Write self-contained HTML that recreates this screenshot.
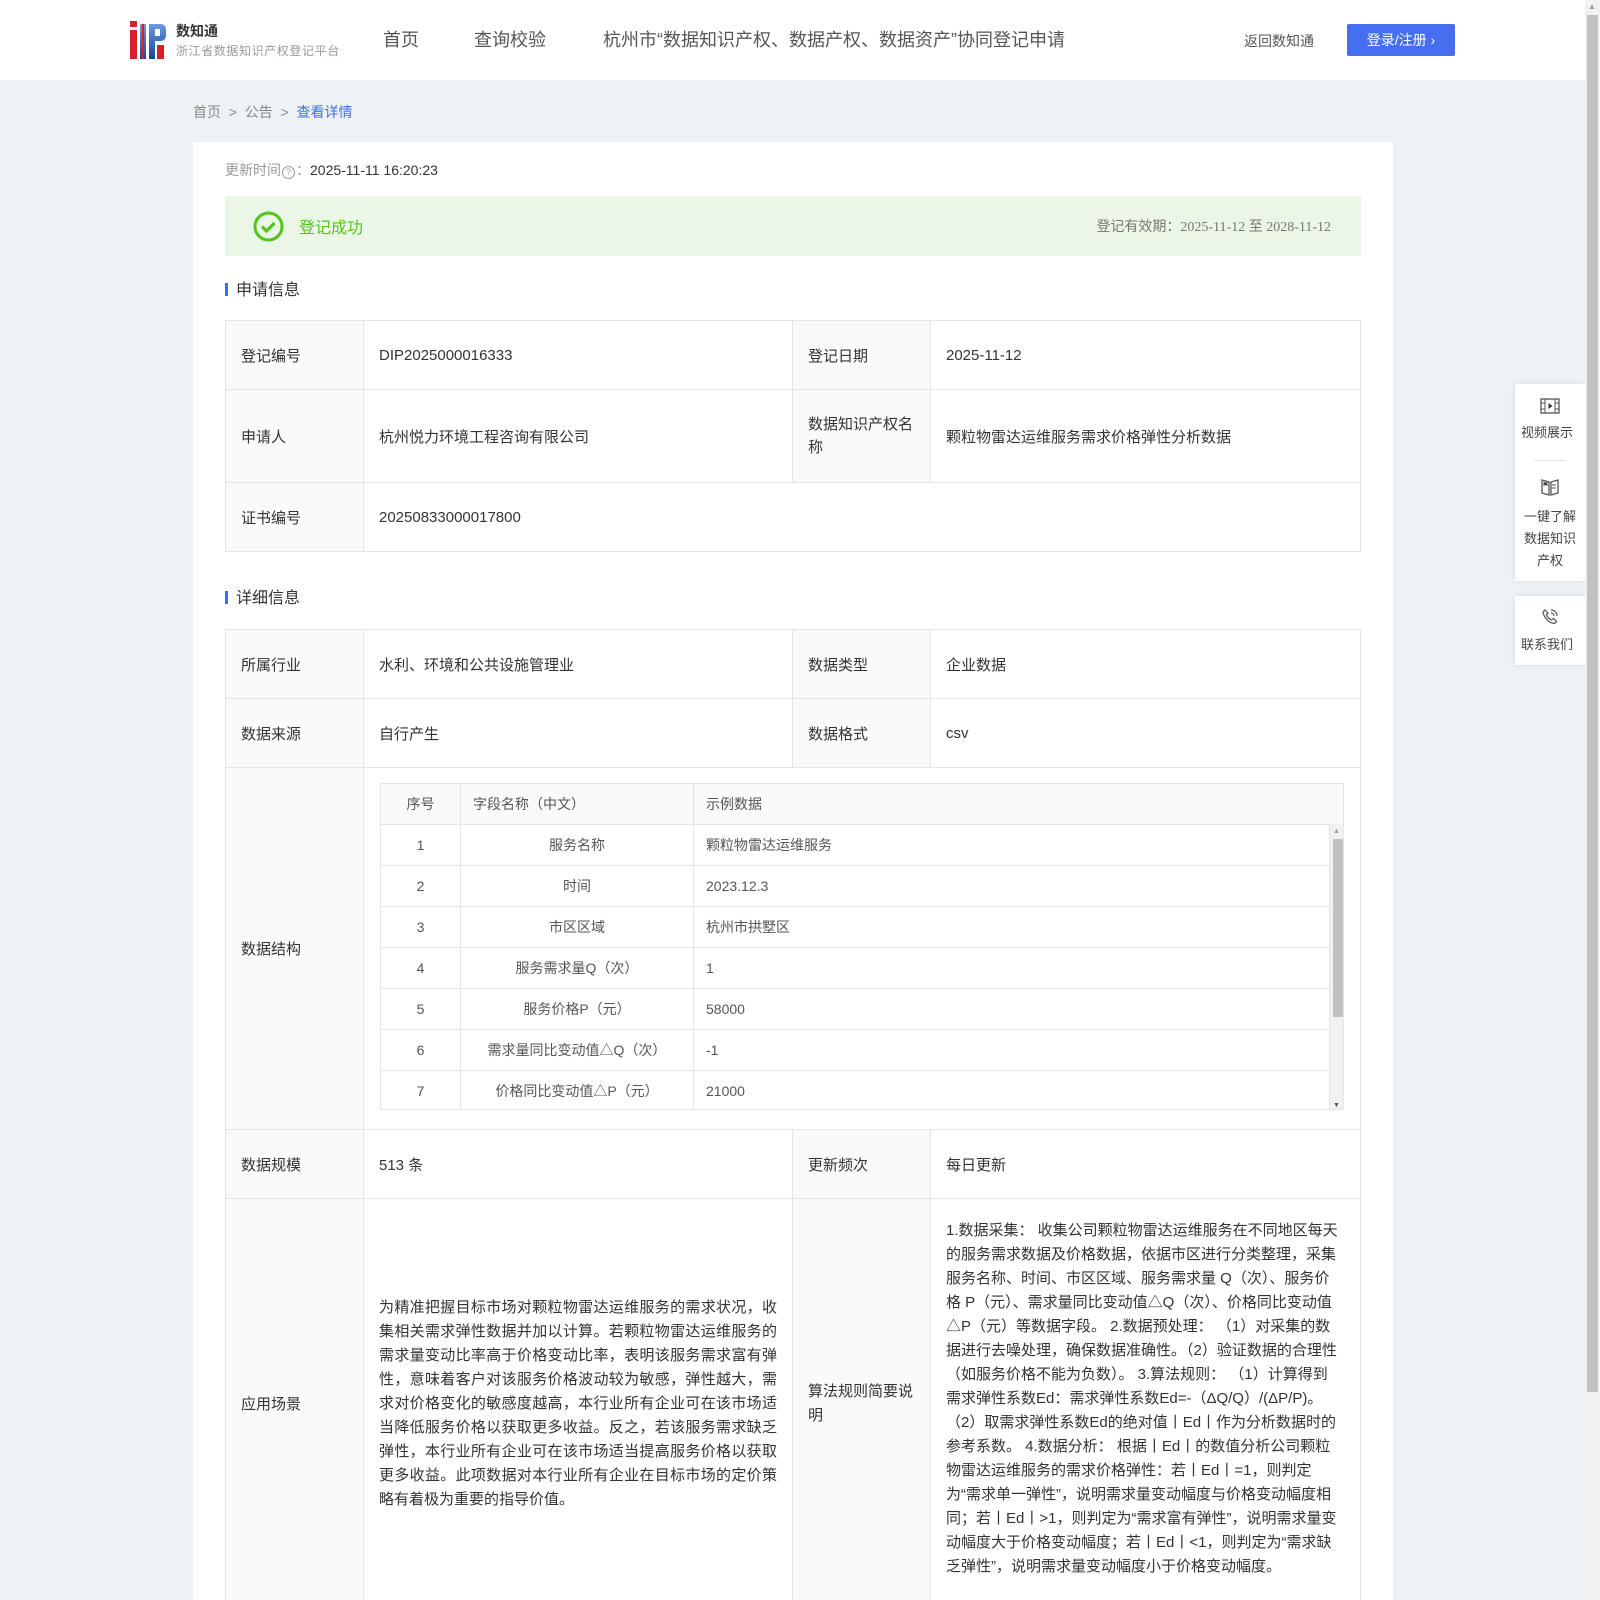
<!DOCTYPE html>
<html><head><meta charset="utf-8"><style>
*{margin:0;padding:0;box-sizing:border-box}
html,body{width:1600px;height:1600px;overflow:hidden}
body{background:#eef2f5;font-family:"Liberation Sans","Noto Sans CJK SC",sans-serif;color:#333;font-size:14px;position:relative}
.hdr{position:absolute;left:0;top:0;width:1585px;height:80px;background:#fff}
.abs{position:absolute;white-space:nowrap}
.nav{font-size:18px;color:#555;top:26px}
.card{position:absolute;left:193px;top:142px;width:1200px;height:1500px;background:#fff}
table{border-collapse:collapse;position:absolute;table-layout:fixed}
td{border:1px solid #e5e5e5;padding:0 15px;font-size:15px;color:#333;vertical-align:middle}
td.l{background:#fafafa}
.sec{font-size:16px;color:#333;}
.sec:before{content:"";display:inline-block;width:3px;height:13px;background:#3e6ef0;margin-right:8px;vertical-align:-1px}
.nt td{font-size:14px;color:#555;padding:0 12px;height:41px}
.side{position:absolute;left:1515px;width:70px;background:#fff;box-shadow:0 0 6px rgba(0,0,0,.1);text-align:center;font-size:13px;color:#444}
</style></head><body>
<div class="hdr">
  <svg class="abs" style="left:130px;top:21px" width="36" height="38" viewBox="0 0 36 38">
    <defs><linearGradient id="g" x1="0" y1="0" x2="0" y2="1"><stop offset="0" stop-color="#6a9be0"/><stop offset="1" stop-color="#1c3f9a"/></linearGradient></defs>
    <rect x="0" y="0" width="7" height="6" fill="#d8202a"/><rect x="0" y="9" width="7" height="29" fill="#d8202a"/>
    <rect x="10" y="3" width="6" height="35" fill="url(#g)"/><rect x="12" y="3" width="2" height="35" fill="#d8202a"/>
    <path d="M19 3h12a5 5 0 0 1 5 5v7a5 5 0 0 1-5 5h-6v18h-6z" fill="url(#g)"/><rect x="25" y="8" width="5" height="7" fill="#fff"/>
    <rect x="27" y="24" width="7" height="14" fill="#d8202a"/>
  </svg>
  <div class="abs" style="left:176px;top:21px;font-size:14px;font-weight:bold;color:#333">数知通</div>
  <div class="abs" style="left:176px;top:42px;font-size:12px;letter-spacing:0.6px;color:#999">浙江省数据知识产权登记平台</div>
  <div class="abs nav" style="left:383px">首页</div>
  <div class="abs nav" style="left:474px">查询校验</div>
  <div class="abs nav" style="left:603px">杭州市“数据知识产权、数据产权、数据资产”协同登记申请</div>
  <div class="abs" style="left:1244px;top:31px;font-size:14px;color:#555">返回数知通</div>
  <div class="abs" style="left:1347px;top:24px;width:108px;height:32px;background:#456ff0;border-radius:2px;color:#fff;font-size:14px;line-height:32px;text-align:center">登录/注册 ›</div>
</div>
<div class="abs" style="left:193px;top:102px;font-size:14px;color:#888">首页 &nbsp;&gt;&nbsp; 公告 &nbsp;&gt;&nbsp; <span style="color:#3e6ef0">查看详情</span></div>
<div class="card">
  <div class="abs" style="left:32px;top:18px;font-size:14px;color:#999">更新时间<span style="display:inline-block;width:13px;height:13px;border:1px solid #999;border-radius:50%;font-size:9px;line-height:11px;text-align:center;vertical-align:0;margin:0 1px">?</span>：<span style="color:#333">2025-11-11 16:20:23</span></div>
  <div class="abs" style="left:32px;top:54px;width:1136px;height:60px;background:#ebf7e6">
    <svg class="abs" style="left:28px;top:15px" width="31" height="31" viewBox="0 0 31 31"><circle cx="15.5" cy="15.5" r="13.5" fill="none" stroke="#52c41a" stroke-width="3"/><path d="M9 15.5l4.5 4.5 8-8" fill="none" stroke="#52c41a" stroke-width="3.2"/></svg>
    <div class="abs" style="left:74px;top:18px;font-size:16px;color:#52c41a">登记成功</div>
    <div class="abs" style="right:30px;top:20px;font-size:14px;color:#777;font-family:'Liberation Serif','Noto Sans CJK SC',serif">登记有效期：2025-11-12 至 2028-11-12</div>
  </div>
  <div class="abs sec" style="left:32px;top:134px">申请信息</div>
  <table style="left:32px;top:178px;width:1136px">
    <colgroup><col style="width:138px"><col style="width:429px"><col style="width:138px"><col></colgroup>
    <tr style="height:69px"><td class="l">登记编号</td><td>DIP2025000016333</td><td class="l">登记日期</td><td>2025-11-12</td></tr>
    <tr style="height:93px"><td class="l">申请人</td><td>杭州悦力环境工程咨询有限公司</td><td class="l" style="line-height:23px">数据知识产权名称</td><td>颗粒物雷达运维服务需求价格弹性分析数据</td></tr>
    <tr style="height:69px"><td class="l">证书编号</td><td colspan="3">20250833000017800</td></tr>
  </table>
  <div class="abs sec" style="left:32px;top:442px">详细信息</div>
  <table style="left:32px;top:487px;width:1136px">
    <colgroup><col style="width:138px"><col style="width:429px"><col style="width:138px"><col></colgroup>
    <tr style="height:69px"><td class="l">所属行业</td><td>水利、环境和公共设施管理业</td><td class="l">数据类型</td><td>企业数据</td></tr>
    <tr style="height:69px"><td class="l">数据来源</td><td>自行产生</td><td class="l">数据格式</td><td>csv</td></tr>
    <tr style="height:362px"><td class="l">数据结构</td><td colspan="3" style="position:relative"></td></tr>
    <tr style="height:69px"><td class="l">数据规模</td><td>513 条</td><td class="l">更新频次</td><td>每日更新</td></tr>
    <tr style="height:410px"><td class="l">应用场景</td><td style="line-height:24px;font-size:15px;text-align:justify;padding-right:15px">为精准把握目标市场对颗粒物雷达运维服务的需求状况，收集相关需求弹性数据并加以计算。若颗粒物雷达运维服务的需求量变动比率高于价格变动比率，表明该服务需求富有弹性，意味着客户对该服务价格波动较为敏感，弹性越大，需求对价格变化的敏感度越高，本行业所有企业可在该市场适当降低服务价格以获取更多收益。反之，若该服务需求缺乏弹性，本行业所有企业可在该市场适当提高服务价格以获取更多收益。此项数据对本行业所有企业在目标市场的定价策略有着极为重要的指导价值。</td><td class="l" style="line-height:24px">算法规则简要说明</td><td style="line-height:24px;font-size:15px;padding-right:20px;vertical-align:top;padding-top:20px">1.数据采集： 收集公司颗粒物雷达运维服务在不同地区每天的服务需求数据及价格数据，依据市区进行分类整理，采集服务名称、时间、市区区域、服务需求量 Q（次）、服务价格 P（元）、需求量同比变动值△Q（次）、价格同比变动值△P（元）等数据字段。 2.数据预处理： （1）对采集的数据进行去噪处理，确保数据准确性。（2）验证数据的合理性（如服务价格不能为负数）。 3.算法规则： （1）计算得到需求弹性系数Ed：需求弹性系数Ed=-（ΔQ/Q）/(ΔP/P)。（2）取需求弹性系数Ed的绝对值丨Ed丨作为分析数据时的参考系数。 4.数据分析： 根据丨Ed丨的数值分析公司颗粒物雷达运维服务的需求价格弹性：若丨Ed丨=1，则判定为“需求单一弹性”，说明需求量变动幅度与价格变动幅度相同；若丨Ed丨&gt;1，则判定为“需求富有弹性”，说明需求量变动幅度大于价格变动幅度；若丨Ed丨&lt;1，则判定为“需求缺乏弹性”，说明需求量变动幅度小于价格变动幅度。</td></tr>
  </table>
  <div class="abs" style="left:187px;top:641px;width:964px;height:327px;border:1px solid #e5e5e5;overflow:hidden">
    <table class="nt" style="left:-1px;top:-1px;width:964px">
      <colgroup><col style="width:80px"><col style="width:233px"><col></colgroup>
      <tr style="background:#fafafa"><td style="text-align:center">序号</td><td>字段名称（中文）</td><td>示例数据</td></tr>
      <tr><td style="text-align:center">1</td><td style="text-align:center">服务名称</td><td>颗粒物雷达运维服务</td></tr>
      <tr><td style="text-align:center">2</td><td style="text-align:center">时间</td><td>2023.12.3</td></tr>
      <tr><td style="text-align:center">3</td><td style="text-align:center">市区区域</td><td>杭州市拱墅区</td></tr>
      <tr><td style="text-align:center">4</td><td style="text-align:center">服务需求量Q（次）</td><td>1</td></tr>
      <tr><td style="text-align:center">5</td><td style="text-align:center">服务价格P（元）</td><td>58000</td></tr>
      <tr><td style="text-align:center">6</td><td style="text-align:center">需求量同比变动值△Q（次）</td><td>-1</td></tr>
      <tr><td style="text-align:center">7</td><td style="text-align:center">价格同比变动值△P（元）</td><td>21000</td></tr>
    </table>
    <div class="abs" style="left:948px;top:40px;width:15px;height:287px;background:#f1f1f1;border-left:1px solid #e5e5e5"><div class="abs" style="left:3px;top:15px;width:10px;height:178px;background:#c1c1c1"></div><div class="abs" style="left:3px;top:4px;font-size:7px;color:#999">▲</div><div class="abs" style="left:3px;bottom:2px;font-size:7px;color:#555">▼</div></div>
  </div>
</div>
<div class="side" style="top:384px;height:197px">
  <svg class="abs" style="left:25px;top:14px" width="20" height="16" viewBox="0 0 20 16"><rect x="1" y="1" width="18" height="14" fill="none" stroke="#555" stroke-width="1.3"/><path d="M5 1v14M15 1v14M1 5h4M1 11h4M15 5h4M15 11h4" stroke="#555" stroke-width="1"/><path d="M8.5 5v6l4-3z" fill="#333"/></svg>
  <div class="abs" style="left:6px;top:38px">视频展示</div>
  <div class="abs" style="left:19px;top:76px;width:32px;height:1px;background:#e3e3e3"></div>
  <svg class="abs" style="left:25px;top:94px" width="20" height="18" viewBox="0 0 20 18"><path d="M2 2l7 2v13l-7-2zM18 2l-7 2v13l7-2z" fill="none" stroke="#555" stroke-width="1.3"/><path d="M3.5 4v4l2-1 2 1V4.5" fill="#444"/><path d="M12 7h4M12 10h4" stroke="#555"/></svg>
  <div class="abs" style="left:6px;top:122px;line-height:22px;width:58px;white-space:normal">一键了解数据知识产权</div>
</div>
<div class="side" style="top:596px;height:69px">
  <svg class="abs" style="left:26px;top:12px" width="18" height="18" viewBox="0 0 18 18"><path d="M4 2l3 3-1.5 2a9 9 0 0 0 5 5l2-1.5 3 3-2 2C8 15 3 10 2 4z" fill="none" stroke="#555" stroke-width="1.2"/><path d="M10 2a6 6 0 0 1 6 6M10 5a3 3 0 0 1 3 3" fill="none" stroke="#555" stroke-width="1.2"/></svg>
  <div class="abs" style="left:6px;top:38px">联系我们</div>
</div>
<div class="abs" style="left:1585px;top:0;width:15px;height:1600px;background:#f1f1f1">
  <div class="abs" style="left:2px;top:15px;width:11px;height:1377px;background:#c1c1c1"></div>
  <div class="abs" style="left:3px;top:2px;font-size:8px;color:#999">▲</div>
</div>
</body></html>
